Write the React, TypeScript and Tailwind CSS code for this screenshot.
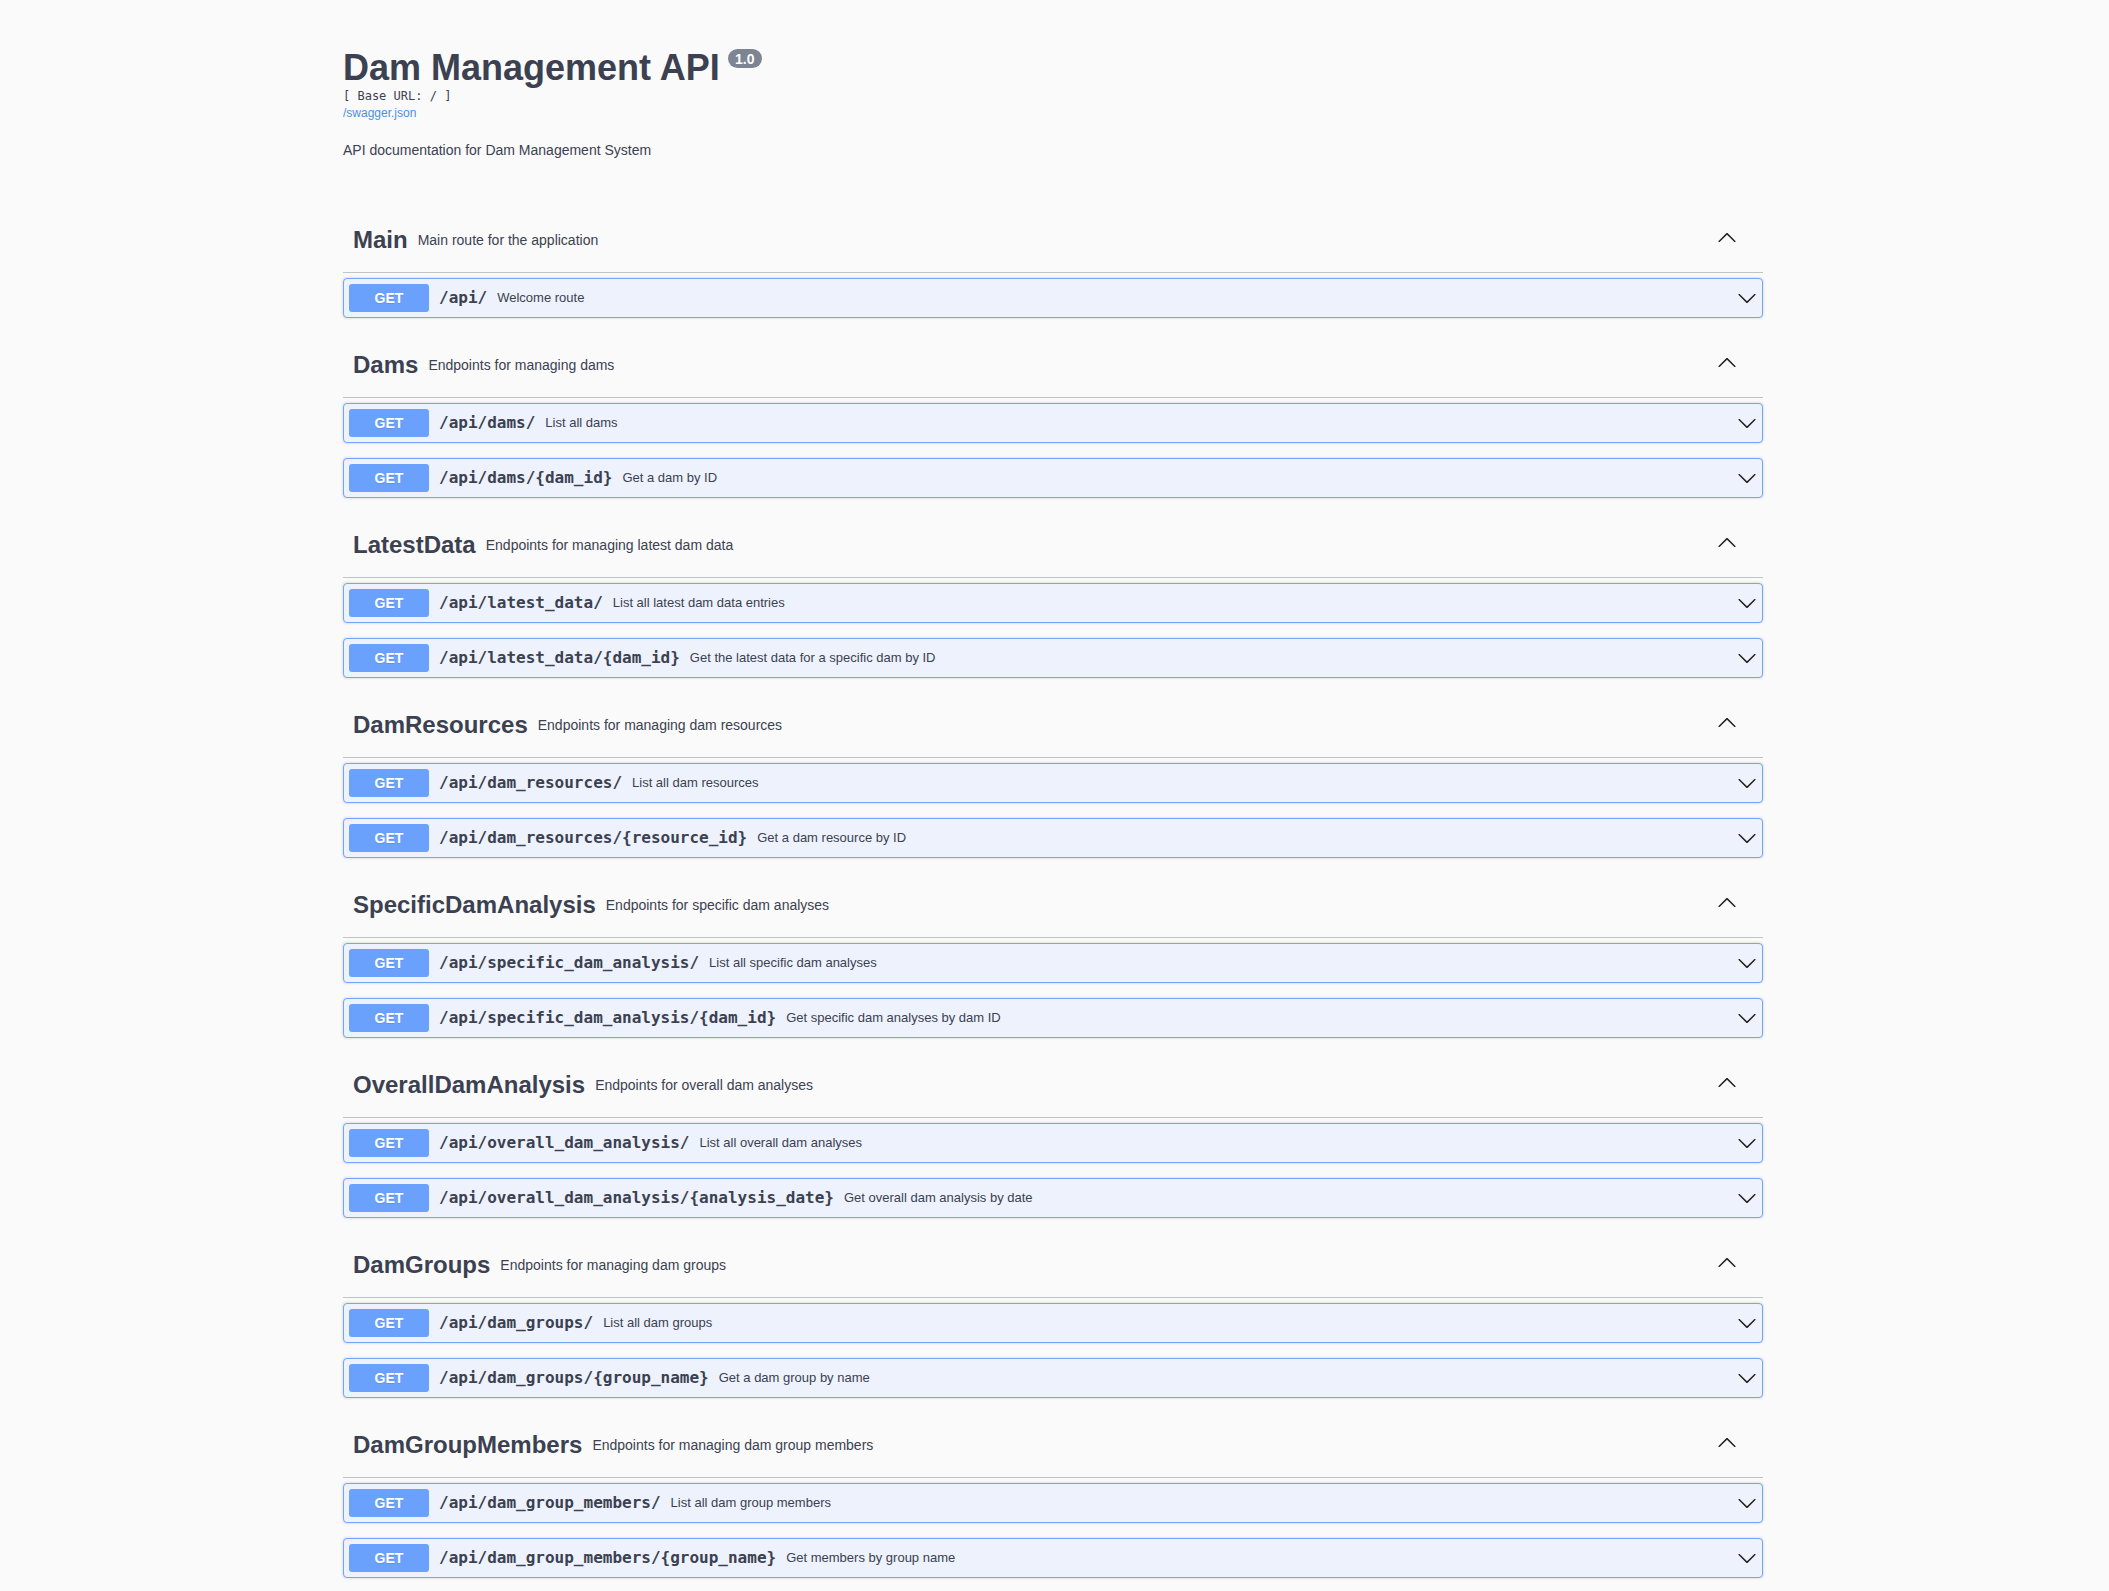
import React from "react";

type Endpoint = { path: string; summary: string };
type Tag = { name: string; description: string; endpoints: Endpoint[] };

const tags: Tag[] = [
  {
    name: "Main",
    description: "Main route for the application",
    endpoints: [{ path: "/api/", summary: "Welcome route" }],
  },
  {
    name: "Dams",
    description: "Endpoints for managing dams",
    endpoints: [
      { path: "/api/dams/", summary: "List all dams" },
      { path: "/api/dams/{dam_id}", summary: "Get a dam by ID" },
    ],
  },
  {
    name: "LatestData",
    description: "Endpoints for managing latest dam data",
    endpoints: [
      { path: "/api/latest_data/", summary: "List all latest dam data entries" },
      { path: "/api/latest_data/{dam_id}", summary: "Get the latest data for a specific dam by ID" },
    ],
  },
  {
    name: "DamResources",
    description: "Endpoints for managing dam resources",
    endpoints: [
      { path: "/api/dam_resources/", summary: "List all dam resources" },
      { path: "/api/dam_resources/{resource_id}", summary: "Get a dam resource by ID" },
    ],
  },
  {
    name: "SpecificDamAnalysis",
    description: "Endpoints for specific dam analyses",
    endpoints: [
      { path: "/api/specific_dam_analysis/", summary: "List all specific dam analyses" },
      { path: "/api/specific_dam_analysis/{dam_id}", summary: "Get specific dam analyses by dam ID" },
    ],
  },
  {
    name: "OverallDamAnalysis",
    description: "Endpoints for overall dam analyses",
    endpoints: [
      { path: "/api/overall_dam_analysis/", summary: "List all overall dam analyses" },
      { path: "/api/overall_dam_analysis/{analysis_date}", summary: "Get overall dam analysis by date" },
    ],
  },
  {
    name: "DamGroups",
    description: "Endpoints for managing dam groups",
    endpoints: [
      { path: "/api/dam_groups/", summary: "List all dam groups" },
      { path: "/api/dam_groups/{group_name}", summary: "Get a dam group by name" },
    ],
  },
  {
    name: "DamGroupMembers",
    description: "Endpoints for managing dam group members",
    endpoints: [
      { path: "/api/dam_group_members/", summary: "List all dam group members" },
      { path: "/api/dam_group_members/{group_name}", summary: "Get members by group name" },
    ],
  },
];

const sans = "font-['Liberation_Sans',Arial,sans-serif]";
const mono = "font-['DejaVu_Sans_Mono','Liberation_Mono',monospace]";

function ArrowDown() {
  return (
    <svg width="20" height="20" viewBox="0 0 20 20" className="shrink-0 fill-[#1f1f1f]">
      <path d="M17.418 6.109c.272-.268.709-.268.979 0s.271.701 0 .969l-7.908 7.83c-.27.268-.707.268-.979 0l-7.908-7.83c-.27-.268-.27-.701 0-.969.271-.268.709-.268.979 0L10 13.25l7.418-7.141z" />
    </svg>
  );
}

function ArrowUp() {
  return (
    <svg width="20" height="20" viewBox="0 0 20 20" className="mt-[-6px] shrink-0 fill-[#1f1f1f]">
      <path d="M17.418 14.908c.272.268.709.268.979 0s.271-.701 0-.969l-7.908-7.83c-.27-.268-.707-.268-.979 0l-7.908 7.83c-.27.268-.27.701 0 .969.271.268.709.268.979 0L10 7.767l7.418 7.141z" />
    </svg>
  );
}

function Operation({ ep }: { ep: Endpoint }) {
  return (
    <div className="mb-[15px] h-[40px] rounded-[4px] border border-[#72a6f9] bg-[#edf2fc] shadow-[0_0_3px_rgba(0,0,0,0.19)]">
      <div className="flex h-full items-center p-[5px]">
        <span
          className={`${sans} flex h-[28px] w-[80px] shrink-0 items-center justify-center rounded-[3px] bg-[#6aa1fc] text-[14px] font-bold text-white [text-shadow:0_1px_0_rgba(0,0,0,0.1)]`}
        >
          GET
        </span>
        <span className={`${mono} px-[10px] text-[16px] font-bold text-[#3b4151]`}>{ep.path}</span>
        <span className={`${sans} flex-1 text-[13px] text-[#3b4151]`}>{ep.summary}</span>
        <ArrowDown />
      </div>
    </div>
  );
}

function TagSection({ tag }: { tag: Tag }) {
  return (
    <section className="flex flex-col">
      <div className="mb-[5px] flex h-[65px] items-center border-b border-[#c2c3c7] pl-[10px] pr-[26px]">
        <h3 className={`${sans} text-[24px] font-bold leading-[30px] text-[#3b4151]`}>{tag.name}</h3>
        <small className={`${sans} flex-1 px-[10px] text-[14px] text-[#3b4151]`}>{tag.description}</small>
        <ArrowUp />
      </div>
      {tag.endpoints.map((ep) => (
        <Operation key={ep.path} ep={ep} />
      ))}
    </section>
  );
}

export default function App() {
  return (
    <div className="min-h-screen bg-[#fafafa] pr-[3px]">
      <div className="mx-auto max-w-[1460px] px-5">
        <div className="pt-[48px]">
          <div className="flex items-start">
            <h2 className={`${sans} text-[36px] font-bold leading-[40px] text-[#3b4151]`}>Dam Management API</h2>
            <span
              className={`${sans} ml-[8px] mt-[1px] flex h-[19px] w-[34px] items-center justify-center rounded-full bg-[#7d8492] text-[14px] font-bold leading-none text-white`}
            >
              1.0
            </span>
          </div>
          <pre className={`${mono} text-[12px] leading-[17px] text-[#3b4151]`}>[ Base URL: / ]</pre>
          <a href="#" className={`${sans} block text-[12px] leading-[17px] text-[#4990e2]`}>
            /swagger.json
          </a>
          <p className={`${sans} mt-[18px] text-[14px] leading-[20px] text-[#3b4151]`}>
            API documentation for Dam Management System
          </p>
        </div>
        <div className="mt-[48px]">
          {tags.map((t) => (
            <TagSection key={t.name} tag={t} />
          ))}
        </div>
      </div>
    </div>
  );
}
